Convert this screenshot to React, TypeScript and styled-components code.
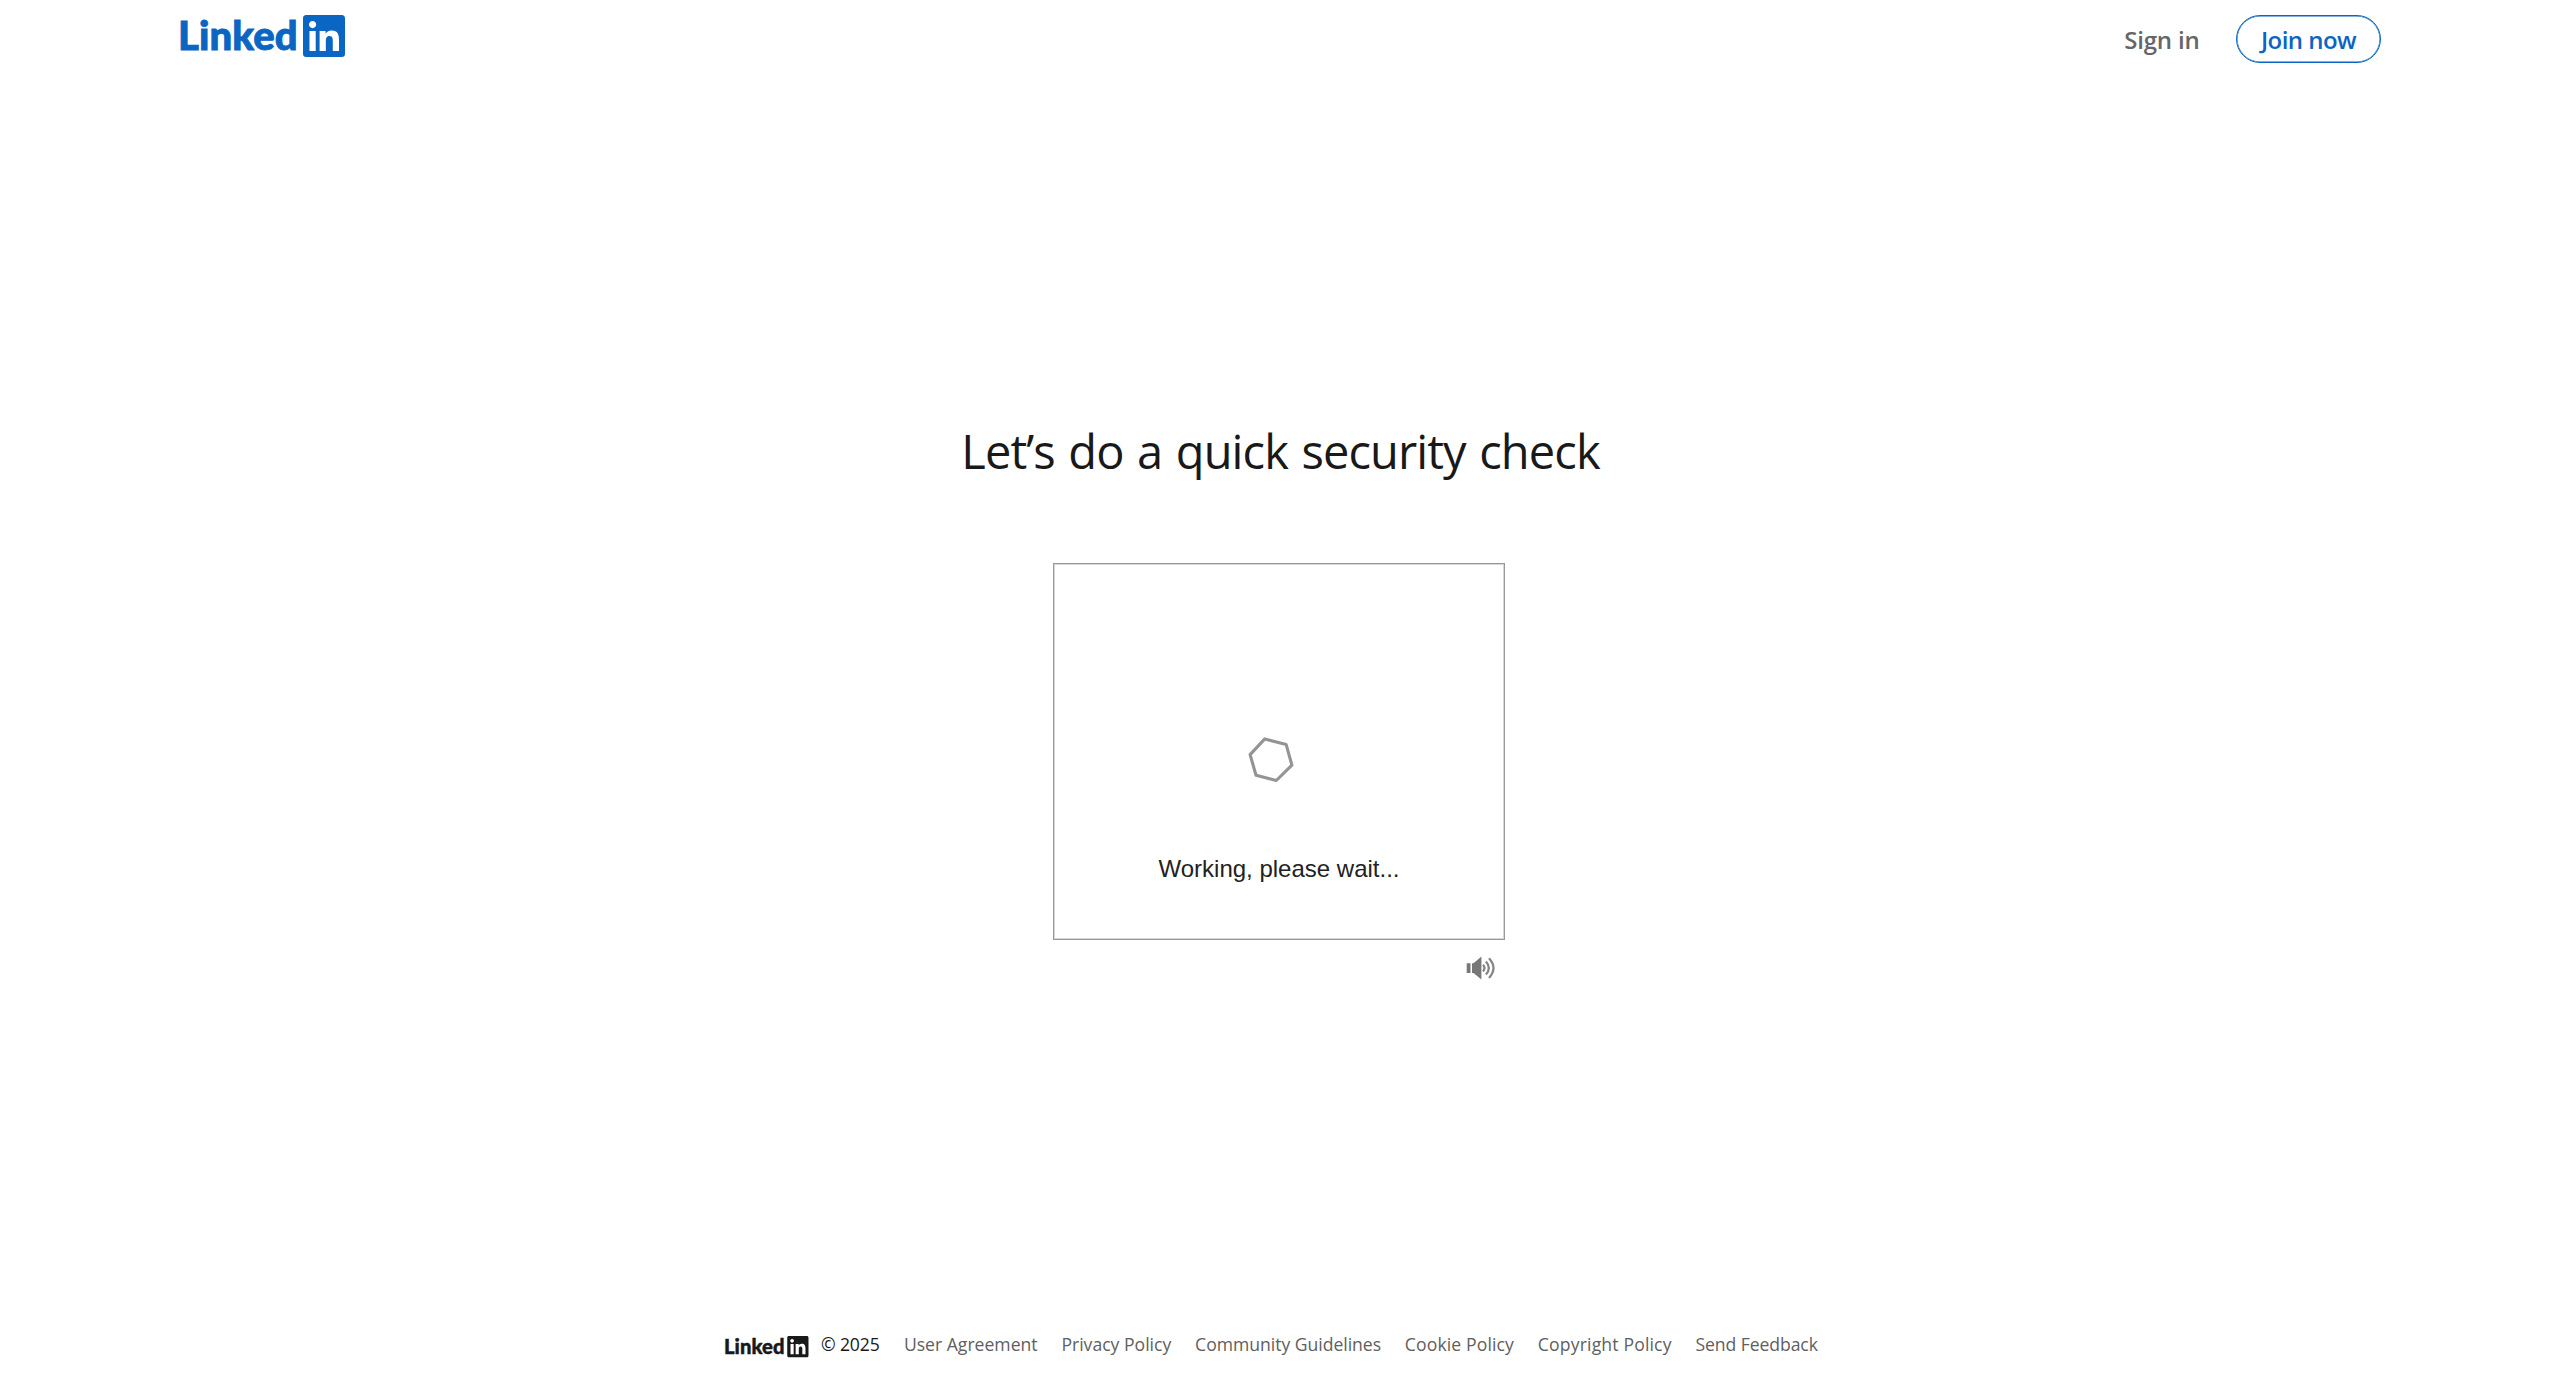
import React from 'react';
import styled, { createGlobalStyle } from 'styled-components';
import { FaLinkedin } from 'react-icons/fa';

const GlobalStyle = createGlobalStyle`
  *, *::before, *::after { box-sizing: border-box; }
  body {
    margin: 0;
    background: #fff;
    color: #191919;
    font-family: "Open Sans", "Noto Sans", sans-serif;
  }
`;

const Page = styled.div`
  display: flex;
  flex-direction: column;
  min-height: 1398px;
`;

const Header = styled.header`
  display: flex;
  justify-content: space-between;
  align-items: flex-start;
  padding: 15px 180px 0;
`;

const LogoSvg = styled.svg<{ $width: number; $color: string }>`
  display: block;
  flex: none;
  width: ${(p) => p.$width}px;
  color: ${(p) => p.$color};
  overflow: visible;
`;

const Wordmark = styled.text`
  font-family: Lato, sans-serif;
  font-weight: 900;
  font-size: 40px;
  fill: currentColor;
  stroke: currentColor;
  stroke-width: 0.9px;
`;

const Nav = styled.nav`
  display: flex;
  align-items: center;
  gap: 36.5px;
  height: 48px;
`;

const SignIn = styled.a`
  padding-top: 2px;
  font-size: 24px;
  line-height: 30px;
  font-weight: 600;
  letter-spacing: -0.2px;
  color: #666;
`;

const JoinButton = styled.a`
  display: flex;
  align-items: center;
  justify-content: center;
  width: 145px;
  height: 48px;
  padding-top: 2px;
  border: 1.5px solid #0a66c2;
  border-radius: 24px;
  box-shadow: inset 0 0 0 0.5px #0a66c2;
  font-size: 24px;
  line-height: 30px;
  font-weight: 600;
  letter-spacing: -0.55px;
  color: #0a66c2;
`;

const Main = styled.main`
  display: flex;
  flex: 1;
  flex-direction: column;
  align-items: center;
  padding-top: 358px;
`;

const Title = styled.h1`
  margin: 0 0 82px;
  font-size: 47px;
  line-height: 60px;
  font-weight: 400;
  letter-spacing: -0.9px;
  word-spacing: 2.2px;
`;

const Challenge = styled.section`
  display: flex;
  flex-direction: column;
  align-items: flex-start;
  width: 455px;
`;

const Frame = styled.div`
  display: flex;
  flex-direction: column;
  align-items: center;
  width: 452px;
  height: 377px;
  padding-top: 172px;
  border: 1px solid #999;
  box-shadow: inset 0 0 0 1px #d6d6d6;
`;

const Spinner = styled.svg`
  display: block;
  width: 48px;
  height: 48px;
  margin-right: 16px;
`;

const Status = styled.p`
  margin: 70px 0 0;
  font-family: "Liberation Sans", Arial, sans-serif;
  font-size: 24px;
  line-height: 30px;
  color: #222;
`;

const AudioButton = styled.button`
  display: flex;
  margin: 16px 0 0 413px;
  padding: 0;
  border: 0;
  background: none;
`;

const Footer = styled.footer`
  display: flex;
  align-items: flex-start;
  padding: 0 0 41px 725px;
`;

const FooterLogo = styled.div`
  padding-top: 4px;
`;

const Copyright = styled.span`
  width: 83px;
  margin-left: 12.4px;
  font-size: 17.6px;
  line-height: 24px;
  letter-spacing: -0.1px;
  white-space: nowrap;
`;

const Links = styled.nav`
  display: flex;
  gap: 23.8px;
`;

const FooterLink = styled.a<{ $track: number }>`
  font-size: 17.6px;
  line-height: 24px;
  font-weight: 500;
  letter-spacing: ${(p) => p.$track}px;
  color: #606060;
  white-space: nowrap;
`;

const links = [
  { label: 'User Agreement', track: 0 },
  { label: 'Privacy Policy', track: 0 },
  { label: 'Community Guidelines', track: -0.03 },
  { label: 'Cookie Policy', track: 0.12 },
  { label: 'Copyright Policy', track: 0.15 },
  { label: 'Send Feedback', track: -0.08 },
];

function Logo({ width, color }: { width: number; color: string }) {
  return (
    <LogoSvg $width={width} $color={color} viewBox="0 0 165 42" role="img" aria-label="LinkedIn">
      <Wordmark x="-2" y="35.4" textLength="119.5">Linked</Wordmark>
      <FaLinkedin x={120} y={-3} size={48} />
    </LogoSvg>
  );
}

export default function App() {
  return (
    <Page>
      <GlobalStyle />
      <Header>
        <Logo width={165} color="#0a66c2" />
        <Nav>
          <SignIn>Sign in</SignIn>
          <JoinButton>Join now</JoinButton>
        </Nav>
      </Header>
      <Main>
        <Title>Let’s do a quick security check</Title>
        <Challenge>
          <Frame>
            <Spinner viewBox="0 0 48 48">
              <path
                d="M18.1 3.8 39.5 9.5 45.2 30.1 29.6 45.4 9.3 40.1 3.4 19.5Z"
                transform="translate(-.3 -.9)"
                fill="none"
                stroke="#939498"
                strokeWidth="3.1"
                strokeLinejoin="round"
              />
            </Spinner>
            <Status>Working, please wait...</Status>
          </Frame>
          <AudioButton aria-label="Audio challenge">
            <svg width="30" height="24" viewBox="0 0 30 24">
              <path d="M.7 7.2H4.5V17H.7ZM6 7.2H7.5L15.4.6V23.4L7.5 17H6Z" fill="#777" />
              <g fill="none" stroke="#858585" strokeWidth="2.2">
                <path d="M17 8.8Q20 12 17 15.4" />
                <path d="M19.9 5.5Q25.8 12 19.9 18.6" />
                <path d="M23 2.2Q32 12 23 22" />
              </g>
            </svg>
          </AudioButton>
        </Challenge>
      </Main>
      <Footer>
        <FooterLogo>
          <Logo width={83.5} color="#191919" />
        </FooterLogo>
        <Copyright>© 2025</Copyright>
        <Links>
          {links.map((l) => (
            <FooterLink key={l.label} $track={l.track}>{l.label}</FooterLink>
          ))}
        </Links>
      </Footer>
    </Page>
  );
}
